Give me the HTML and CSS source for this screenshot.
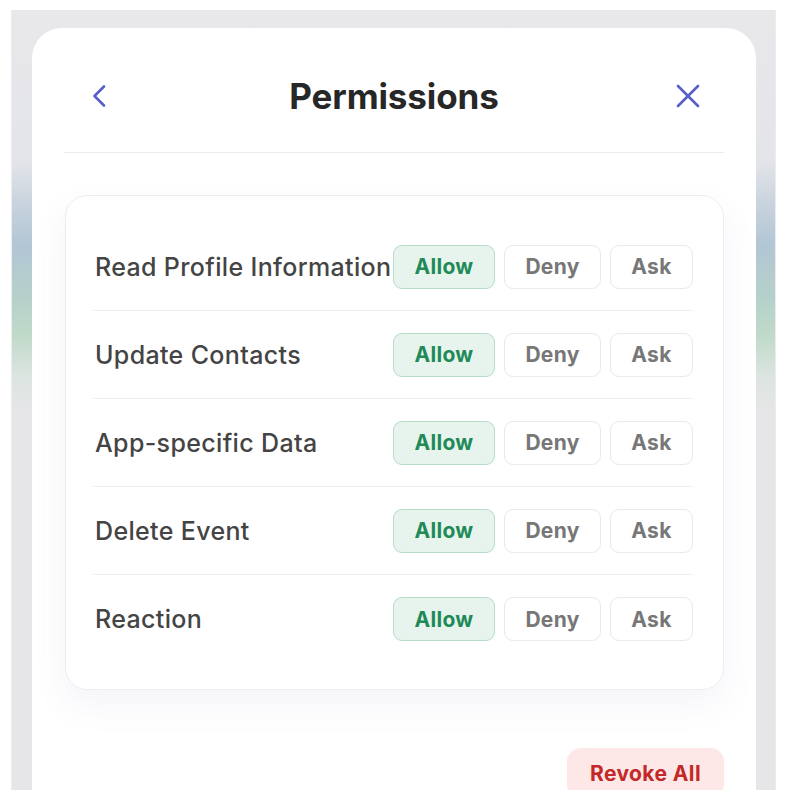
FILE: index.html
```html
<!DOCTYPE html>
<html lang="en">
<head>
<meta charset="utf-8">
<title>Permissions</title>
<link rel="stylesheet" href="styles.css">
</head>
<body>
<div class="frame">
  <div class="modal">
    <div class="header">
      <button class="icon-btn" aria-label="Back">
        <svg width="24" height="24" viewBox="0 0 24 24"><polyline points="16,2.5 6.5,12 16,21.5" fill="none" stroke="currentColor" stroke-width="2.6" stroke-linecap="round" stroke-linejoin="round"/></svg>
      </button>
      <h1 class="title">Permissions</h1>
      <button class="icon-btn" aria-label="Close">
        <svg width="24" height="24" viewBox="0 0 24 24"><path d="M2 2 L22 22 M22 2 L2 22" fill="none" stroke="currentColor" stroke-width="2.6" stroke-linecap="round"/></svg>
      </button>
    </div>
    <div class="card">
      <div class="row">
        <span class="label">Read Profile Information</span>
        <div class="choices"><span class="chip chip-allow on">Allow</span><span class="chip chip-deny">Deny</span><span class="chip chip-ask">Ask</span></div>
      </div>
      <div class="row">
        <span class="label">Update Contacts</span>
        <div class="choices"><span class="chip chip-allow on">Allow</span><span class="chip chip-deny">Deny</span><span class="chip chip-ask">Ask</span></div>
      </div>
      <div class="row">
        <span class="label">App-specific Data</span>
        <div class="choices"><span class="chip chip-allow on">Allow</span><span class="chip chip-deny">Deny</span><span class="chip chip-ask">Ask</span></div>
      </div>
      <div class="row">
        <span class="label">Delete Event</span>
        <div class="choices"><span class="chip chip-allow on">Allow</span><span class="chip chip-deny">Deny</span><span class="chip chip-ask">Ask</span></div>
      </div>
      <div class="row">
        <span class="label">Reaction</span>
        <div class="choices"><span class="chip chip-allow on">Allow</span><span class="chip chip-deny">Deny</span><span class="chip chip-ask">Ask</span></div>
      </div>
    </div>
    <div class="footer">
      <button class="revoke">Revoke All</button>
    </div>
  </div>
</div>
</body>
</html>
```
FILE: styles.css
```css
html, body {
  margin: 0;
  padding: 0;
  background: #ffffff;
  height: 100%;
  overflow: hidden;
}
body {
  font-family: Inter, "Liberation Sans", Arial, sans-serif;
}
.frame {
  margin: 10px 0 0 11px;
  width: 765px;
  box-sizing: border-box;
  padding: 18px 19px 0 20px;
  height: 900px;
  background: linear-gradient(to bottom,
    #e8e8eb 0,
    #e4e5e9 150px,
    #c8d3de 195px,
    #b2c6d5 235px,
    #b5d0cb 285px,
    #bfdac9 325px,
    #dce4e0 365px,
    #e6e6e8 405px,
    #e6e6e8 100%);
  border-left: 1px solid #ececee;
  border-right: 1px solid #ececee;
}
.modal {
  background: #ffffff;
  border-radius: 30px 30px 0 0;
  padding: 36px 32px 0 32px;
  height: 900px;
  box-sizing: border-box;
}
.header {
  display: flex;
  align-items: center;
  justify-content: space-between;
  height: 64px;
  padding: 0 14px 24px 14px;
  border-bottom: 1px solid #ebebef;
}
.icon-btn {
  width: 44px;
  height: 44px;
  border: 0;
  background: transparent;
  color: #5a5ecb;
  display: flex;
  align-items: center;
  justify-content: center;
  padding: 0;
}
.title {
  margin: 0;
  font-size: 35px;
  font-weight: 700;
  color: #272727;
  letter-spacing: -0.1px;
}
.card {
  margin: 42px 0 0 1px;
  border: 1px solid #ececf3;
  border-radius: 22px;
  padding: 27px 30px 26px 27px;
  box-shadow: 0 14px 36px rgba(96, 96, 170, 0.07);
}
.row {
  display: flex;
  align-items: center;
  height: 88px;
  box-sizing: border-box;
  border-bottom: 1px solid #efeff2;
}
.row:last-child {
  border-bottom: 0;
}
.label {
  flex: 1;
  min-width: 0;
  padding-left: 2px;
  font-size: 25px;
  font-weight: 500;
  letter-spacing: 0.35px;
  color: #444444;
  white-space: nowrap;
}
.choices {
  display: flex;
  gap: 9px;
}
.chip {
  height: 44px;
  box-sizing: border-box;
  display: flex;
  align-items: center;
  justify-content: center;
  border: 1px solid #e9e9ee;
  border-radius: 9px;
  font-size: 21px;
  font-weight: 700;
  letter-spacing: 0.3px;
  color: #777777;
  background: #ffffff;
}
.chip-allow { width: 102px; }
.chip-deny { width: 97px; }
.chip-ask { width: 83px; }
.chip.on {
  background: #e7f4ee;
  border-color: #b7dcc8;
  color: #1f8a57;
}
.footer {
  display: flex;
  justify-content: flex-end;
  margin-top: 58px;
}
.revoke {
  height: 50px;
  padding: 0 23px;
  border: 0;
  border-radius: 14px;
  background: #fde7e7;
  color: #c42828;
  font-family: Inter, "Liberation Sans", Arial, sans-serif;
  font-size: 21px;
  font-weight: 700;
  letter-spacing: 0.4px;
}
```
